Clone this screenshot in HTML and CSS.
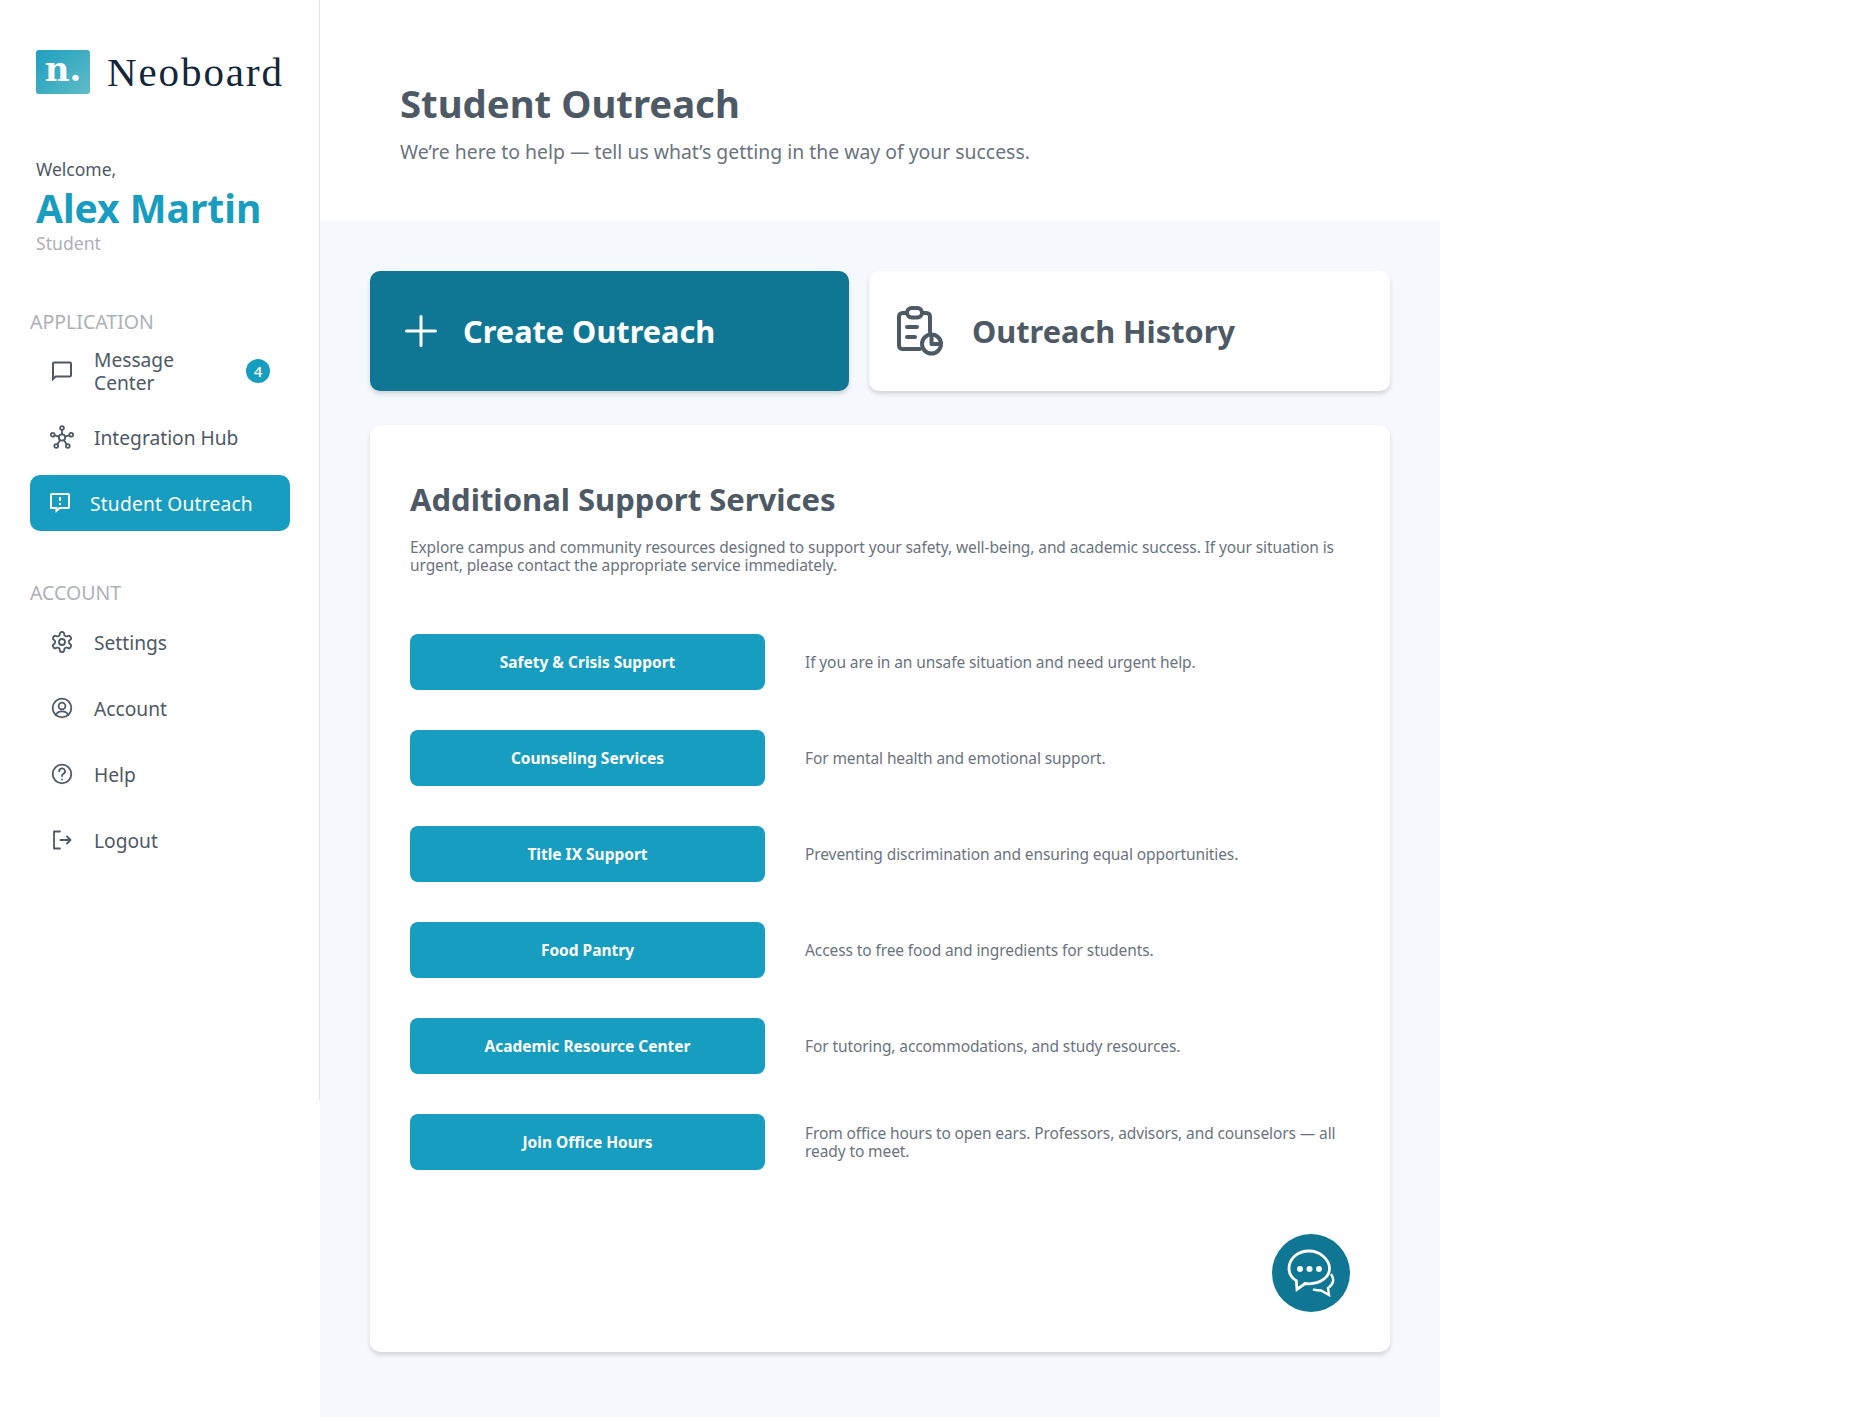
FILE: index.html
```html
<!DOCTYPE html>
<html>
<head>
    <title>Student Outreach</title>
    <link rel="stylesheet" href="styles.css">
</head>
<body>
    <aside class="sidebar">
        <div class="brand">
            <div class="brand-mark">n.</div>
            <div class="brand-name">Neoboard</div>
        </div>

        <div class="welcome">
            <div class="welcome-label">Welcome,</div>
            <div class="welcome-name">Alex Martin</div>
            <div class="welcome-role">Student</div>
        </div>

        <div class="nav-title">APPLICATION</div>
        <a class="nav-item">
            <svg class="nav-icon" viewBox="0 0 24 24"><path class="fill" d="M20 2.500H4c-1.100 0-2 .9-2 2v18l4-4h14c1.100 0 2-.9 2-2v-12c0-1.100-.9-2-2-2zm0 14H5.200L4 17.700V4.500h16v12z"/></svg>
            <span class="nav-text nav-text-wrap">Message Center</span>
            <span class="badge">4</span>
        </a>
        <a class="nav-item">
            <svg class="nav-icon" viewBox="0 0 24 24">
                <circle cx="12" cy="12.500" r="3.200"/><circle cx="12" cy="3" r="1.900"/><circle cx="2.800" cy="9.800" r="1.900"/><circle cx="21.200" cy="9.800" r="1.900"/><circle cx="6.200" cy="21" r="1.900"/><circle cx="17.800" cy="21" r="1.900"/>
                <path d="M12 4.900v4.400M4.600 10.400l4.400 1.200M19.400 10.400L15 11.600M7.200 19.400l3-4.300M16.800 19.400l-3-4.300"/>
            </svg>
            <span class="nav-text">Integration Hub</span>
        </a>
        <a class="nav-item nav-item-active">
            <svg class="nav-icon" viewBox="0 0 24 24"><path class="fill" d="M20 2H4c-1.100 0-2 .9-2 2v14h5.500v4l4.500-4h8c1.100 0 2-.9 2-2V4c0-1.100-.9-2-2-2zm0 14h-8.800L9.500 17.800V16H4V4h16v12zm-9-4h2v2h-2zm0-6h2v4h-2z"/></svg>
            <span class="nav-text">Student Outreach</span>
        </a>

        <div class="nav-title nav-title-second">ACCOUNT</div>
        <a class="nav-item">
            <svg class="nav-icon" viewBox="0 0 24 24">
                <circle cx="12" cy="12" r="3"/>
                <path d="M12.220 2h-.44a2 2 0 0 0-2 2v.18a2 2 0 0 1-1 1.730l-.43.25a2 2 0 0 1-2 0l-.15-.08a2 2 0 0 0-2.730.73l-.22.38a2 2 0 0 0 .73 2.730l.15.1a2 2 0 0 1 1 1.720v.51a2 2 0 0 1-1 1.740l-.15.09a2 2 0 0 0-.73 2.730l.22.38a2 2 0 0 0 2.730.73l.15-.08a2 2 0 0 1 2 0l.43.25a2 2 0 0 1 1 1.730V20a2 2 0 0 0 2 2h.44a2 2 0 0 0 2-2v-.18a2 2 0 0 1 1-1.730l.43-.25a2 2 0 0 1 2 0l.15.08a2 2 0 0 0 2.730-.73l.22-.39a2 2 0 0 0-.73-2.730l-.15-.08a2 2 0 0 1-1-1.740v-.5a2 2 0 0 1 1-1.740l.15-.09a2 2 0 0 0 .73-2.730l-.22-.38a2 2 0 0 0-2.730-.73l-.15.08a2 2 0 0 1-2 0l-.43-.25a2 2 0 0 1-1-1.730V4a2 2 0 0 0-2-2z"/>
            </svg>
            <span class="nav-text">Settings</span>
        </a>
        <a class="nav-item">
            <svg class="nav-icon" viewBox="0 0 24 24">
                <circle cx="12" cy="12" r="9.300"/><circle cx="12" cy="10" r="3.400"/>
                <path d="M5.800 19c1-2.400 3.300-3.700 6.200-3.700s5.200 1.300 6.200 3.700"/>
            </svg>
            <span class="nav-text">Account</span>
        </a>
        <a class="nav-item">
            <svg class="nav-icon" viewBox="0 0 24 24">
                <circle cx="12" cy="12" r="9.300"/>
                <path d="M9.200 9.300a2.900 2.900 0 1 1 4.300 2.500c-1 .6-1.500 1.100-1.500 2.200"/><path d="M12 17.300v.1"/>
            </svg>
            <span class="nav-text">Help</span>
        </a>
        <a class="nav-item">
            <svg class="nav-icon" viewBox="0 0 24 24">
                <path d="M10 3.500H4v17h6M10.500 12H20.500M17 8.500l3.500 3.500-3.500 3.500"/>
            </svg>
            <span class="nav-text">Logout</span>
        </a>
    </aside>

    <main class="main">
        <header class="page-header">
            <h1>Student Outreach</h1>
            <p>We’re here to help — tell us what’s getting in the way of your success.</p>
        </header>

        <div class="content">
            <div class="action-row">
                <a class="action action-create">
                    <svg class="plus-icon" viewBox="0 0 32 32"><path d="M16 1.500v29M1.500 16h29"/></svg>
                    <span>Create Outreach</span>
                </a>
                <a class="action action-history">
                    <svg class="history-icon" viewBox="0 0 48 50">
                        <path d="M10 7H6.500A3.500 3.500 0 0 0 3 10.500v29A3.500 3.500 0 0 0 6.500 43H24"/>
                        <path d="M27 7h3.500A3.500 3.500 0 0 1 34 10.500V26"/>
                        <rect x="11" y="2" width="15" height="9.500" rx="4.700"/>
                        <path d="M11 21h10M11 31h8"/>
                        <circle cx="35.500" cy="38" r="9.500"/>
                        <path d="M35.500 31v7h7"/>
                    </svg>
                    <span>Outreach History</span>
                </a>
            </div>

            <section class="card">
                <h2>Additional Support Services</h2>
                <p class="card-intro">Explore campus and community resources designed to support your safety, well-being, and academic success. If your situation is urgent, please contact the appropriate service immediately.</p>

                <div class="service-list">
                    <div class="service">
                        <a class="service-btn">Safety &amp; Crisis Support</a>
                        <p>If you are in an unsafe situation and need urgent help.</p>
                    </div>
                    <div class="service">
                        <a class="service-btn">Counseling Services</a>
                        <p>For mental health and emotional support.</p>
                    </div>
                    <div class="service">
                        <a class="service-btn">Title IX Support</a>
                        <p>Preventing discrimination and ensuring equal opportunities.</p>
                    </div>
                    <div class="service">
                        <a class="service-btn">Food Pantry</a>
                        <p>Access to free food and ingredients for students.</p>
                    </div>
                    <div class="service">
                        <a class="service-btn">Academic Resource Center</a>
                        <p>For tutoring, accommodations, and study resources.</p>
                    </div>
                    <div class="service">
                        <a class="service-btn">Join Office Hours</a>
                        <p>From office hours to open ears. Professors, advisors, and counselors — all ready to meet.</p>
                    </div>
                </div>

                <div class="chat-row">
                    <button class="chat-btn">
                        <svg viewBox="0 0 48 48">
                            <path d="M22 2C10.800 2 2 9.500 2 19.500c0 5 2.600 9.300 7.300 12.300l.7 8.500 8-5.800c1.400.2 2.800.3 4 .3 11.200 0 20.500-6.500 20.500-15.300S33.200 2 22 2z"/>
                            <path class="thin" d="M44 25c3.500 4.500 3 10-3 14l1 7-8-4.500c-2.500 0-5.500-.3-8-1.200"/>
                            <circle class="solid" cx="13" cy="20" r="3"/><circle class="solid" cx="22.500" cy="20" r="3"/><circle class="solid" cx="32" cy="20" r="3"/>
                        </svg>
                    </button>
                </div>
            </section>
        </div>
    </main>
</body>
</html>
```

FILE: styles.css
```css
* {
    box-sizing: border-box;
}
body {
    margin: 0;
    display: flex;
    align-items: flex-start;
    background-color: #fff;
    font-family: "Noto Sans", sans-serif;
    color: #4d5965;
}
p, h1, h2 {
    margin: 0;
}

/* sidebar */
.sidebar {
    width: 320px;
    height: 1100px;
    flex-shrink: 0;
    padding: 50px 29px 0 30px;
    border-right: 1px solid #e1e4e9;
}
.brand {
    display: flex;
    align-items: center;
    margin-left: 6px;
    height: 44px;
}
.brand-mark {
    width: 54px;
    height: 44px;
    border-radius: 3px;
    background: linear-gradient(135deg, #1f9fc0, #5fbcc6);
    color: #fff;
    font-family: "DejaVu Serif", serif;
    font-weight: 700;
    font-size: 34px;
    line-height: 38px;
    text-align: center;
}
.brand-name {
    margin-left: 17px;
    font-family: "Liberation Serif", serif;
    font-size: 41px;
    letter-spacing: 1.900px;
    line-height: 44px;
    color: #14263a;
}
.welcome {
    margin: 62px 0 0 6px;
}
.welcome-label {
    font-size: 17.500px;
    line-height: 27px;
}
.welcome-name {
    margin-top: 2px;
    font-size: 39px;
    font-weight: 700;
    line-height: 46px;
    color: #179dc0;
}
.welcome-role {
    font-size: 17.600px;
    line-height: 24px;
    color: #adb1b6;
}
.nav-title {
    margin-top: 55px;
    font-size: 19.500px;
    line-height: 24px;
    color: #adb1b6;
}
.nav-title-second {
    margin-top: 50px;
}
.nav-item {
    display: flex;
    align-items: center;
    height: 56px;
    margin-top: 10px;
    padding: 0 20px 0 20px;
    border-radius: 10px;
    font-size: 19.200px;
    line-height: 23px;
}
.nav-title + .nav-item {
    margin-top: 9px;
}
.nav-icon {
    width: 24px;
    height: 24px;
    flex-shrink: 0;
    fill: none;
    stroke: #4d5965;
    stroke-width: 1.800;
    stroke-linecap: round;
    stroke-linejoin: round;
}
.nav-icon .fill {
    fill: #4d5965;
    stroke: none;
}
.nav-text {
    margin-left: 20px;
}
.nav-text-wrap {
    width: 90px;
}
.badge {
    width: 24px;
    height: 24px;
    margin-left: auto;
    border-radius: 50%;
    background-color: #179dc0;
    color: #fff;
    font-size: 15px;
    font-weight: 500;
    line-height: 24px;
    text-align: center;
}
.nav-item-active {
    background-color: #179dc0;
    color: #fff;
    padding-left: 18px;
}
.nav-item-active .nav-icon .fill {
    fill: #fff;
}
.nav-item-active .nav-text {
    margin-left: 18px;
    letter-spacing: 0.200px;
}

/* main */
.main {
    width: 1120px;
}
.page-header {
    height: 221px;
    padding: 77px 0 0 80px;
}
.page-header h1 {
    font-size: 38.300px;
    font-weight: 700;
    line-height: 52px;
}
.page-header p {
    margin-top: 9px;
    font-size: 19.400px;
    line-height: 28px;
    color: #6a747e;
}
.content {
    padding: 50px 50px 65px;
    background-color: #f5f8fc;
}
.action-row {
    display: flex;
    gap: 20px;
}
.action {
    display: flex;
    align-items: center;
    height: 120px;
    border-radius: 10px;
    font-size: 30.700px;
    font-weight: 700;
    box-shadow: 0 3px 4px rgba(0, 0, 0, 0.14);
}
.action-create {
    width: 479px;
    padding-left: 35px;
    background-color: #0f7794;
    color: #fff;
}
.action-history {
    flex: 1;
    padding-left: 27px;
    background-color: #fff;
}
.plus-icon {
    width: 32px;
    height: 32px;
    margin-right: 26px;
    fill: none;
    stroke: #fff;
    stroke-width: 3;
    stroke-linecap: round;
}
.history-icon {
    width: 48px;
    height: 50px;
    margin-right: 28px;
    fill: none;
    stroke: #4d5965;
    stroke-width: 4;
    stroke-linecap: round;
    stroke-linejoin: round;
}
.card {
    margin-top: 34px;
    padding: 52px 40px 40px;
    border-radius: 10px;
    background-color: #fff;
    box-shadow: 0 3px 4px rgba(0, 0, 0, 0.14);
}
.card h2 {
    font-size: 31px;
    font-weight: 700;
    line-height: 44px;
}
.card-intro {
    margin-top: 17px;
    font-size: 15.500px;
    letter-spacing: -0.100px;
    line-height: 18px;
    color: #6a747e;
}
.service-list {
    display: flex;
    flex-direction: column;
    gap: 40px;
    margin-top: 60px;
}
.service {
    display: flex;
    align-items: center;
    gap: 40px;
}
.service-btn {
    width: 355px;
    height: 56px;
    flex-shrink: 0;
    border-radius: 8px;
    background-color: #179dc0;
    color: #fff;
    font-size: 15.500px;
    font-weight: 700;
    line-height: 56px;
    text-align: center;
}
.service p {
    font-size: 15.500px;
    letter-spacing: -0.100px;
    line-height: 18px;
    color: #6a747e;
}
.chat-row {
    display: flex;
    justify-content: flex-end;
    margin-top: 64px;
}
.chat-btn {
    width: 78px;
    height: 78px;
    padding: 15px;
    border: none;
    border-radius: 50%;
    background-color: #0f7794;
}
.chat-btn svg {
    display: block;
    width: 48px;
    height: 48px;
    fill: none;
    stroke: #fff;
    stroke-width: 2.800;
}
.chat-btn .thin {
    stroke-width: 2.400;
}
.chat-btn .solid {
    fill: #fff;
    stroke: none;
}
```
